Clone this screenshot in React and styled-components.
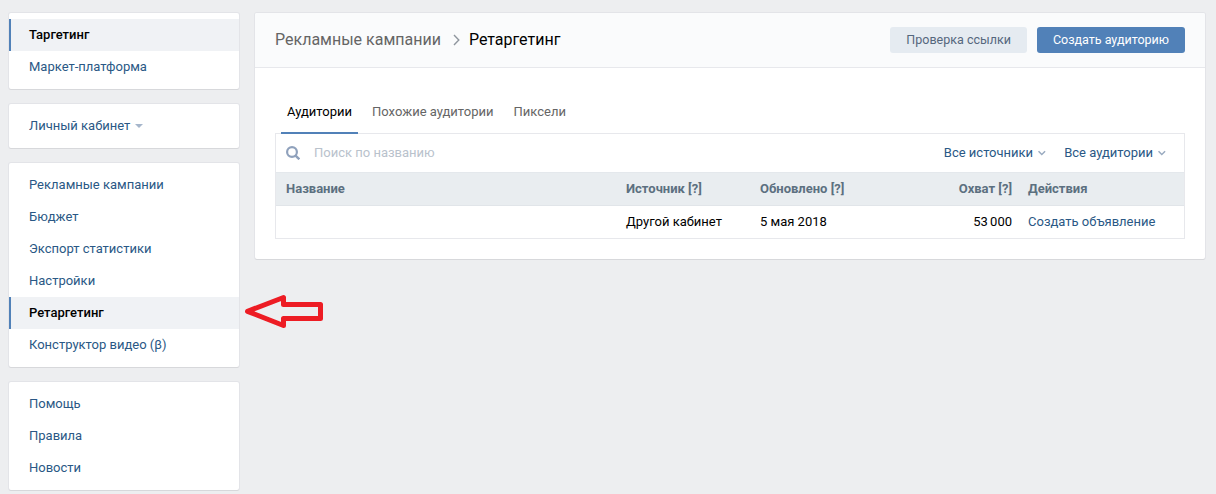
import React from 'react';
import styled, { createGlobalStyle, css } from 'styled-components';

const GlobalStyle = createGlobalStyle`
	* {
		box-sizing: border-box;
	}
	body {
		margin: 0;
		background-color: #edeef0;
		color: #000000;
		font-family: Roboto, "Open Sans", sans-serif;
		font-size: 13px;
		line-height: 16px;
	}
`;

const Page = styled.div`
	position: relative;
	display: flex;
	align-items: flex-start;
	gap: 16px;
	height: 494px;
	padding: 13px 11px 0 9px;
	overflow: hidden;
`;

const Box = styled.div`
	background-color: #ffffff;
	border-radius: 2px;
	box-shadow: 0 1px 0 0 #d7d8db, 0 0 0 1px #e3e4e8;
`;

const Sidebar = styled.aside`
	display: flex;
	flex-direction: column;
	gap: 15px;
	width: 230px;
	flex: none;
`;

const Menu = styled(Box)`
	padding: 6px 0;
`;

const MenuItem = styled.a`
	display: flex;
	align-items: center;
	gap: 5px;
	height: 32px;
	padding-left: 20px;
	color: #2a5885;
	cursor: pointer;
	${props => props.$active && css`
		padding-left: 18px;
		border-left: 2px solid #5181b8;
		background-color: #f0f2f5;
		color: #000000;
		font-weight: 500;
	`}
`;

const Main = styled(Box)`
	flex: 1;
	height: 246px;
`;

const Header = styled.header`
	display: flex;
	align-items: center;
	height: 55px;
	padding: 0 20px;
	border-bottom: 1px solid #e7e8ec;
	border-radius: 2px 2px 0 0;
	background-color: #fafbfc;
`;

const Crumbs = styled.div`
	display: flex;
	align-items: center;
	flex: 1;
	font-size: 16px;
	line-height: 20px;
`;

const Crumb = styled.span`
	color: ${props => props.$current ? '#000000' : '#656565'};
`;

const CrumbArrow = styled.svg`
	margin: 0 9px 0 12px;
`;

const Button = styled.button`
	height: 26px;
	margin-left: 10px;
	padding: 0 16px;
	border: 0;
	border-radius: 3px;
	background-color: ${props => props.$primary ? '#5181b8' : '#e5ebf1'};
	color: ${props => props.$primary ? '#ffffff' : '#55677d'};
	font: inherit;
	font-size: 12.5px;
	cursor: pointer;
`;

const Tabs = styled.nav`
	display: flex;
	gap: 8px;
	height: 66px;
	margin: 0 20px;
	padding: 26px 0 0 6px;
	border-bottom: 1px solid #e7e8ec;
`;

const Tab = styled.a`
	height: 40px;
	padding: 10px 6px 0;
	border-bottom: 2px solid ${props => props.$active ? '#5181b8' : 'transparent'};
	color: ${props => props.$active ? '#000000' : '#656565'};
	cursor: pointer;
`;

const Panel = styled.section`
	margin: 0 20px;
	border: 1px solid #e7e8ec;
	border-top: 0;
`;

const SearchRow = styled.div`
	display: flex;
	align-items: center;
	height: 38px;
	padding: 0 18px 0 10px;
`;

const Placeholder = styled.span`
	flex: 1;
	padding-left: 14px;
	color: #b9c2cc;
`;

const Filter = styled.a`
	display: flex;
	align-items: center;
	gap: 5px;
	margin-left: 18px;
	color: #2a5885;
	cursor: pointer;
`;

const Row = styled.div`
	display: grid;
	grid-template-columns: 340px 134px 130px 122px 1fr;
	align-items: center;
	height: 32px;
	padding-left: 10px;
	${props => props.$head && css`
		height: 34px;
		border-top: 1px solid #e4e8ec;
		border-bottom: 1px solid #e1e5e9;
		background-color: #e9edf0;
		color: #5c7080;
		font-weight: 700;
	`}
`;

const Cell = styled.span`
	text-align: ${props => props.$right ? 'right' : 'left'};
`;

const Amount = styled(Cell)`
	word-spacing: -1px;
`;

const ActionCell = styled(Cell)`
	padding-left: 16px;
`;

const ActionLink = styled.a`
	color: #2a5885;
	cursor: pointer;
`;

const Pointer = styled.svg`
	position: absolute;
	left: 240px;
	top: 290px;
`;

const menus = [
	['Таргетинг', 'Маркет-платформа'],
	['Личный кабинет'],
	['Рекламные кампании', 'Бюджет', 'Экспорт статистики', 'Настройки', 'Ретаргетинг', 'Конструктор видео (β)'],
	['Помощь', 'Правила', 'Новости'],
];
const activeItems = ['Таргетинг', 'Ретаргетинг'];

const Chevron = () => (
	<svg width="8" height="6" viewBox="0 0 8 6" fill="none" stroke="#9aabc0" strokeWidth="1.5">
		<path d="M0.5 1.2L3.8 4.5L7.1 1.2" />
	</svg>
);

const App = () => (
	<Page>
		<GlobalStyle />
		<Sidebar>
			{menus.map((items) => (
				<Menu key={items[0]}>
					{items.map((item) => (
						<MenuItem key={item} $active={activeItems.includes(item)}>
							{item}
							{item === 'Личный кабинет' && (
								<svg width="8" height="4" viewBox="0 0 8 4"><path d="M0 0H8L4 4Z" fill="#a6b6cb" /></svg>
							)}
						</MenuItem>
					))}
				</Menu>
			))}
		</Sidebar>
		<Main>
			<Header>
				<Crumbs>
					<Crumb>Рекламные кампании</Crumb>
					<CrumbArrow width="7" height="12" viewBox="0 0 7 12" fill="none" stroke="#8f969e" strokeWidth="1.4">
						<path d="M1 1L5.8 6L1 11" />
					</CrumbArrow>
					<Crumb $current>Ретаргетинг</Crumb>
				</Crumbs>
				<Button>Проверка ссылки</Button>
				<Button $primary>Создать аудиторию</Button>
			</Header>
			<Tabs>
				<Tab $active>Аудитории</Tab>
				<Tab>Похожие аудитории</Tab>
				<Tab>Пиксели</Tab>
			</Tabs>
			<Panel>
				<SearchRow>
					<svg width="14" height="14" viewBox="0 0 14 14" fill="none" stroke="#8fa1bc" strokeWidth="2.2">
						<circle cx="6" cy="6" r="4.9" />
						<path d="M9.6 9.6L13.3 13.3" strokeWidth="2.4" />
					</svg>
					<Placeholder>Поиск по названию</Placeholder>
					<Filter>Все источники <Chevron /></Filter>
					<Filter>Все аудитории <Chevron /></Filter>
				</SearchRow>
				<Row $head>
					<Cell>Название</Cell>
					<Cell>Источник [?]</Cell>
					<Cell>Обновлено [?]</Cell>
					<Cell $right>Охват [?]</Cell>
					<ActionCell>Действия</ActionCell>
				</Row>
				<Row>
					<Cell />
					<Cell>Другой кабинет</Cell>
					<Cell>5 мая 2018</Cell>
					<Amount $right>53 000</Amount>
					<ActionCell><ActionLink>Создать объявление</ActionLink></ActionCell>
				</Row>
			</Panel>
		</Main>
		<Pointer width="90" height="44" viewBox="0 0 90 44" fill="none" stroke="#ed1c24" strokeWidth="5" strokeLinejoin="round">
			<path d="M7.5 21.3L43.5 7.5V14.5H80.5V28.5H43.5V35.5Z" />
		</Pointer>
	</Page>
);

export default App;
